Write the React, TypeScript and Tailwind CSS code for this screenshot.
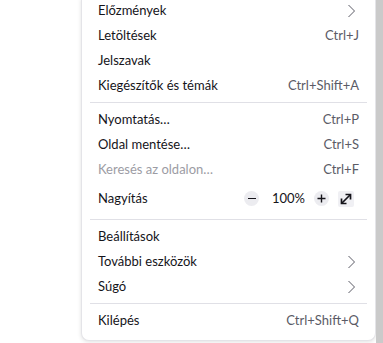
const Chevron = () => (
  <svg width="16" height="16" viewBox="0 0 16 16" fill="none" className="shrink-0">
    <path d="M5.5 2 11.5 8l-6 6" stroke="#5b5b66" strokeWidth="1" />
  </svg>
)

type Item = {
  label: string
  shortcut?: string
  submenu?: boolean
  disabled?: boolean
}

const Row = ({ item }: { item: Item }) => (
  <div className="flex h-[25px] items-center justify-between px-2">
    <span className={item.disabled ? 'text-[#9c9ca4]' : 'text-[#15141a]'}>{item.label}</span>
    {item.shortcut && <span className="text-[#5b5b66]">{item.shortcut}</span>}
    {item.submenu && <Chevron />}
  </div>
)

const Separator = () => <div className="my-1 h-px bg-[#e0e0e6]" />

const ZoomRow = () => (
  <div className="flex h-[33px] items-center justify-between px-2">
    <span className="text-[#15141a]">Nagyítás</span>
    <div className="mr-[5px] flex items-center">
      <button className="flex h-[15px] w-[15px] items-center justify-center rounded-full bg-[#ececf0]">
        <span className="block h-[1.5px] w-[8px] bg-[#15141a]" />
      </button>
      <span className="ml-[13px] w-[30px] text-center text-[#15141a]">100%</span>
      <button className="ml-[12px] flex h-[15px] w-[15px] items-center justify-center rounded-full bg-[#ececf0]">
        <svg width="9" height="9" viewBox="0 0 9 9">
          <path d="M4.5 0.5v8M0.5 4.5h8" stroke="#15141a" strokeWidth="1.4" />
        </svg>
      </button>
      <button className="ml-[9px] flex h-[16px] w-[16px] items-center justify-center rounded-[2px] bg-[#f0f0f4]">
        <svg width="12" height="12" viewBox="0 0 12 12" fill="none">
          <path d="M2 10 10 2" stroke="#15141a" strokeWidth="1.7" />
          <path d="M5.5 1.5h5v5" stroke="#15141a" strokeWidth="1.7" />
          <path d="M1.5 5.5v5h5" stroke="#15141a" strokeWidth="1.7" />
        </svg>
      </button>
    </div>
  </div>
)

export default function App() {
  const top: Item[] = [
    { label: 'Előzmények', submenu: true },
    { label: 'Letöltések', shortcut: 'Ctrl+J' },
    { label: 'Jelszavak' },
    { label: 'Kiegészítők és témák', shortcut: 'Ctrl+Shift+A' },
  ]
  const page: Item[] = [
    { label: 'Nyomtatás…', shortcut: 'Ctrl+P' },
    { label: 'Oldal mentése…', shortcut: 'Ctrl+S' },
    { label: 'Keresés az oldalon…', shortcut: 'Ctrl+F', disabled: true },
  ]
  const tools: Item[] = [
    { label: 'Beállítások' },
    { label: 'További eszközök', submenu: true },
    { label: 'Súgó', submenu: true },
  ]

  return (
    <div
      className="flex h-[343px] w-[383px] overflow-hidden bg-white text-[13px]"
      style={{ fontFamily: 'Lato, "Open Sans", sans-serif' }}
    >
      <div className="w-[81px] shrink-0" />
      <div className="-mt-[2px] h-[343px] w-[295px] shrink-0 rounded-b-[8px] border border-t-0 border-[#e4e4e8] bg-white px-2 pb-2 shadow-[0_1px_4px_rgba(0,0,0,0.12)]">
        {top.map((it) => (
          <Row key={it.label} item={it} />
        ))}
        <Separator />
        {page.map((it) => (
          <Row key={it.label} item={it} />
        ))}
        <ZoomRow />
        <Separator />
        {tools.map((it) => (
          <Row key={it.label} item={it} />
        ))}
        <Separator />
        <Row item={{ label: 'Kilépés', shortcut: 'Ctrl+Shift+Q' }} />
      </div>
      <div className="flex-1 bg-[#cacaca]" />
    </div>
  )
}
